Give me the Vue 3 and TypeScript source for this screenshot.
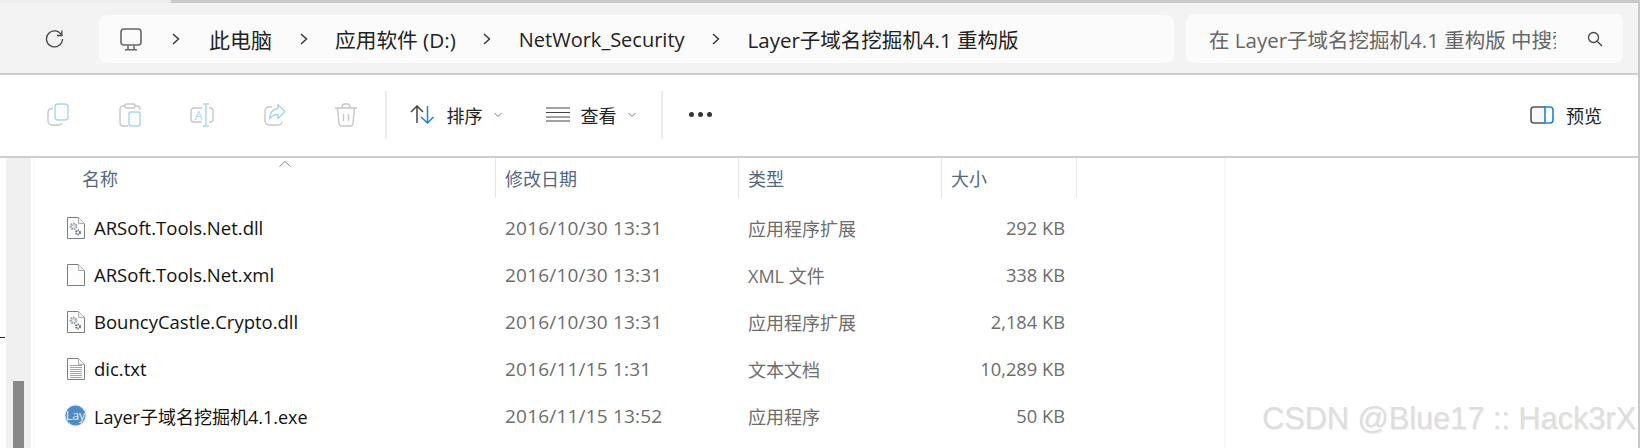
<script setup lang="ts">
interface FileRow {
  name: string
  date: string
  type: string
  size: string
  icon: 'dll' | 'blank' | 'txt' | 'exe'
}

const crumbs = [
  { label: '此电脑', cls: '' },
  { label: '应用软件 (D:)', cls: 'drive' },
  { label: 'NetWork_Security', cls: 'latin' },
  { label: 'Layer子域名挖掘机4.1 重构版', cls: 'mixed' },
]

const files: FileRow[] = [
  { name: 'ARSoft.Tools.Net.dll', date: '2016/10/30 13:31', type: '应用程序扩展', size: '292 KB', icon: 'dll' },
  { name: 'ARSoft.Tools.Net.xml', date: '2016/10/30 13:31', type: 'XML 文件', size: '338 KB', icon: 'blank' },
  { name: 'BouncyCastle.Crypto.dll', date: '2016/10/30 13:31', type: '应用程序扩展', size: '2,184 KB', icon: 'dll' },
  { name: 'dic.txt', date: '2016/11/15 1:31', type: '文本文档', size: '10,289 KB', icon: 'txt' },
  { name: 'Layer子域名挖掘机4.1.exe', date: '2016/11/15 13:52', type: '应用程序', size: '50 KB', icon: 'exe' },
]
</script>

<template>
  <div class="window">
    <div class="top-strip"></div>

    <div class="nav">
      <svg class="refresh" width="19" height="19" viewBox="0 0 19 19" fill="none" stroke="#444" stroke-width="1.3">
        <path d="M16.6 6.2A8 8 0 1 0 17.5 10" />
        <path d="M16.9 1.6v4.9H12" />
      </svg>
      <div class="address">
        <svg class="pc" width="22" height="23" viewBox="0 0 22 23" fill="none" stroke="#666" stroke-width="1.6">
          <rect x="1" y="1" width="20" height="16" rx="3" />
          <path d="M8 17.5v3.5M14 17.5v3.5M5 21.8h12" />
        </svg>
        <template v-for="c in crumbs" :key="c.label">
          <svg class="crumb-sep" width="8" height="12" viewBox="0 0 8 12" fill="none" stroke="#333" stroke-width="1.4">
            <path d="M1 1l5.5 5L1 11" />
          </svg>
          <span class="crumb" :class="c.cls">{{ c.label }}</span>
        </template>
      </div>
      <div class="search">
        <span class="search-text">在 Layer子域名挖掘机4.1 重构版 中搜索</span>
        <svg class="search-icon" width="16" height="16" viewBox="0 0 16 16" fill="none" stroke="#444" stroke-width="1.3">
          <circle cx="6.5" cy="6.5" r="5" />
          <path d="M10.2 10.2L15 15" />
        </svg>
      </div>
    </div>

    <div class="toolbar">
      <div class="tool-icons">
        <svg width="22" height="23" viewBox="0 0 22 23" fill="none" stroke-width="1.4">
          <path d="M6 5.5H5a4 4 0 0 0-4 4V18a4 4 0 0 0 4 4h6.5a4 4 0 0 0 3.500-2" stroke="#c6c6c6" />
          <rect x="8" y="1" width="13" height="16" rx="3" stroke="#a8d3f5" />
        </svg>
        <svg width="22" height="24" viewBox="0 0 22 24" fill="none" stroke-width="1.4">
          <path d="M6 3H4a3 3 0 0 0-3 3v14a3 3 0 0 0 3 3h5M16 3h2a3 3 0 0 1 3 3v1" stroke="#c6c6c6" />
          <rect x="6" y="1" width="10" height="4" rx="1.500" stroke="#c6c6c6" />
          <rect x="10" y="9" width="11" height="14" rx="2" stroke="#a8d3f5" />
        </svg>
        <svg width="24" height="24" viewBox="0 0 24 24" fill="none" stroke-width="1.4">
          <path d="M12 5H4a3 3 0 0 0-3 3v8a3 3 0 0 0 3 3h8M19 5h2a2.500 2.500 0 0 1 2 3v8a2.500 2.500 0 0 1-2 3h-2" stroke="#c6c6c6" />
          <path d="M13 1h6M16 1v22M13 23h6" stroke="#a8d3f5" />
          <text x="8.500" y="16.500" class="rename-a">A</text>
        </svg>
        <svg width="22" height="23" viewBox="0 0 22 23" fill="none" stroke-width="1.4">
          <path d="M8 4H5a4 4 0 0 0-4 4v10a4 4 0 0 0 4 4h9a4 4 0 0 0 4-3.500" stroke="#c6c6c6" />
          <path d="M14 1.500l7 7-7 7v-4c-4 0-6 1-8.500 4.500C6 10 9 6 14 5.500z" stroke="#a8d3f5" stroke-linejoin="round" />
        </svg>
        <svg width="22" height="24" viewBox="0 0 22 24" fill="none" stroke="#c6c6c6" stroke-width="1.4">
          <path d="M0 5h22M7 5V3.500A2.500 2.500 0 0 1 9.500 1h3A2.500 2.500 0 0 1 15 3.500V5" />
          <path d="M2.500 5l1.500 15.500A2.800 2.800 0 0 0 6.800 23h8.400a2.800 2.800 0 0 0 2.800-2.500L19.500 5" />
          <path d="M8.500 11v7M13.500 11v7" />
        </svg>
      </div>
      <span class="divider first"></span>
      <svg class="sort-icon" width="24" height="19" viewBox="0 0 24 19" fill="none" stroke-width="1.5">
        <path d="M1 7l6-6 6 6M7 1v17" stroke="#444" />
        <path d="M11 12l6.500 6 6-6M17.500 18V1" stroke="#1a82d8" />
      </svg>
      <span class="tool-label">排序</span>
      <svg class="caret" width="8" height="6" viewBox="0 0 8 6" fill="none" stroke="#777" stroke-width="1">
        <path d="M.5 1L4 4.500 7.500 1" />
      </svg>
      <svg class="view-icon" width="24" height="15" viewBox="0 0 24 15" fill="none" stroke="#444" stroke-width="1.2">
        <path d="M0 1h24M0 5.500h24M0 10h24M0 14h24" />
      </svg>
      <span class="tool-label">查看</span>
      <svg class="caret" width="8" height="6" viewBox="0 0 8 6" fill="none" stroke="#777" stroke-width="1">
        <path d="M.5 1L4 4.500 7.500 1" />
      </svg>
      <span class="divider second"></span>
      <span class="dots"><i></i><i></i><i></i></span>
      <svg class="preview-icon" width="24" height="18" viewBox="0 0 24 18" fill="none" stroke-width="1.6">
        <path d="M15 1H4a3 3 0 0 0-3 3v10a3 3 0 0 0 3 3h11" stroke="#555" fill="#f8f8f8" />
        <path d="M15 1h5a3 3 0 0 1 3 3v10a3 3 0 0 1-3 3h-5z" stroke="#1a82d8" />
      </svg>
      <span class="tool-label preview-label">预览</span>
    </div>

    <div class="body">
      <div class="tree-edge">
        <span class="tree-mark"></span>
      </div>
      <div class="scrollbar"><div class="thumb"></div></div>
      <div class="pane">
        <div class="list">
          <div class="head">
            <div class="hcell name-head">
              名称
              <svg class="sort-up" width="12" height="6" viewBox="0 0 12 6" fill="none" stroke="#888" stroke-width="1">
                <path d="M.5 5.500L6 .5l5.500 5" />
              </svg>
            </div>
            <div class="hcell">修改日期</div>
            <div class="hcell">类型</div>
            <div class="hcell">大小</div>
          </div>
          <div v-for="f in files" :key="f.name" class="row">
            <div class="name" :class="{ narrow: f.icon === 'exe' }">
              <svg v-if="f.icon === 'exe'" class="file-icon exe" width="23" height="23" viewBox="0 0 23 23">
                <circle cx="11.500" cy="11.500" r="11" fill="#e4ebf3" />
                <circle cx="11.500" cy="11.500" r="10" fill="#4f8ac9" />
                <text x="11.500" y="15.500" class="lay">Lay</text>
              </svg>
              <svg v-else class="file-icon" width="18" height="22" viewBox="0 0 18 22">
                <path d="M.5.5h11l6 6v15H.5z" fill="#fdfdfd" stroke="#7e7e7e" />
                <path d="M11.500.5v6h6" fill="#f2f2f2" stroke="#b0b0b0" />
                <g v-if="f.icon === 'dll'" fill="none">
                  <circle cx="6.500" cy="9.500" r="2.600" stroke="#9aa3ad" stroke-width="2.600" stroke-dasharray="1.500 0.800" />
                  <circle cx="11" cy="15.500" r="2" stroke="#6d7680" stroke-width="2" stroke-dasharray="1.300 0.700" />
                </g>
                <path v-if="f.icon === 'txt'" d="M3 7.500h12M3 9.500h12M3 11.500h12M3 13.500h12M3 15.500h12M3 17.500h12M3 19.500h12" stroke="#a6a6a6" stroke-width="1" />
              </svg>
              <span>{{ f.name }}</span>
            </div>
            <div class="date">{{ f.date }}</div>
            <div class="type">{{ f.type }}</div>
            <div class="size">{{ f.size }}</div>
          </div>
        </div>
      </div>
    </div>

    <div class="watermark">CSDN @Blue17 :: Hack3rX</div>
  </div>
</template>

<style scoped>
.window {
  position: relative;
  width: 1640px;
  height: 448px;
  overflow: hidden;
  background: #fff;
  box-sizing: border-box;
  border-right: 2px solid #c8c8c8;
  font-family: "Open Sans", "Noto Sans CJK SC", sans-serif;
  color: #1a1a1a;
  display: flex;
  flex-direction: column;
}
.top-strip {
  height: 3px;
  background: linear-gradient(90deg, #eeeeee 170px, #c9c9c9 172px);
}
.nav {
  height: 72px;
  box-sizing: border-box;
  background: #f3f3f3;
  border-bottom: 2px solid #cdcdcd;
  display: flex;
  align-items: flex-start;
  padding: 12px 15px 0 45px;
}
.refresh {
  margin-top: 14px;
  margin-right: 35px;
  flex: none;
}
.address {
  width: 1075px;
  height: 48px;
  box-sizing: border-box;
  background: #fbfbfb;
  border-radius: 8px;
  display: flex;
  align-items: center;
  padding-left: 21px;
  font-size: 21px;
  color: #222;
  flex: none;
}
.crumb-sep {
  margin: 0 27.5px;
  flex: none;
}
.pc + .crumb-sep {
  margin: 0 29px 0 30px;
}
.crumb {
  white-space: nowrap;
}
.crumb.drive {
  font-size: 20.7px;
}
.crumb.latin {
  font-size: 20px;
}
.crumb.mixed {
  font-size: 20.5px;
}
.search {
  width: 437px;
  height: 49px;
  margin-left: 12px;
  margin-top: -1px;
  box-sizing: border-box;
  background: #fbfbfb;
  border-radius: 8px;
  display: flex;
  align-items: center;
  padding: 0 20px 0 23px;
  flex: none;
}
.search-text {
  width: 347px;
  overflow: hidden;
  white-space: nowrap;
  font-size: 20.5px;
  color: #666;
}
.search-icon {
  margin-left: auto;
}
.toolbar {
  height: 83px;
  box-sizing: border-box;
  border-bottom: 2px solid #cdcdcd;
  display: flex;
  align-items: center;
  padding: 0 0 2px 47px;
  font-size: 18px;
}
.tool-icons {
  display: flex;
  align-items: center;
  gap: 49.5px;
}
.divider {
  width: 2px;
  height: 48px;
  background: #ececec;
}
.divider.first {
  margin-left: 27.5px;
  margin-right: 23px;
}
.sort-icon {
  margin-right: 13px;
}
.tool-label {
  color: #222;
}
.caret {
  margin-left: 11px;
}
.view-icon {
  margin-left: 44px;
  margin-right: 11px;
}
.divider.second {
  margin-left: 25px;
  margin-right: 26px;
}
.dots {
  display: flex;
  gap: 4px;
}
.dots i {
  width: 5px;
  height: 5px;
  border-radius: 50%;
  background: #333;
}
.preview-icon {
  margin-left: auto;
  margin-right: 12px;
}
.preview-label {
  margin-right: 36px;
}
.rename-a {
  font-size: 13px;
  font-family: "Open Sans", sans-serif;
  fill: #a8d3f5;
  text-anchor: middle;
  stroke: none;
}
.body {
  flex: 1;
  display: flex;
  min-height: 0;
}
.tree-edge {
  width: 6px;
  position: relative;
  flex: none;
}
.tree-mark {
  position: absolute;
  left: 0;
  top: 179px;
  width: 5px;
  height: 1px;
  background: #222;
}
.scrollbar {
  width: 11px;
  flex: none;
  background: #f0f0f0;
  background-clip: padding-box;
  border-right: 2px solid #fff;
  padding: 223px 7px 0;
  box-sizing: content-box;
}
.thumb {
  height: 80px;
  background: #888;
}
.pane {
  flex: 1;
  min-width: 0;
  border-left: 2px solid #f9f9f9;
}
.list {
  width: 1191px;
  box-sizing: border-box;
  height: 100%;
  border-right: 2px solid #f7f7f7;
}
.head,
.row {
  display: grid;
  grid-template-columns: 461px 243px 203px 135px;
}
.head {
  height: 40px;
  color: #55677f;
  font-size: 18px;
}
.hcell {
  position: relative;
  display: flex;
  align-items: center;
  padding-left: 9px;
  border-right: 1px solid #e5e5e5;
}
.hcell.name-head {
  padding-left: 47px;
}
.sort-up {
  position: absolute;
  left: 244px;
  top: 3px;
}
.row {
  height: 47px;
  align-items: center;
  font-size: 18px;
}
.head + .row {
  margin-top: 6px;
}
.name {
  display: flex;
  align-items: center;
  padding-left: 32px;
  color: #111;
  font-size: 18.5px;
  white-space: nowrap;
}
.name.narrow {
  font-size: 18px;
}
.file-icon {
  margin-right: 9px;
  flex: none;
}
.file-icon.exe {
  margin-left: -3px;
  margin-right: 7px;
}
.lay {
  font-size: 12.5px;
  font-family: "Open Sans", sans-serif;
  fill: #e8f0f8;
  text-anchor: middle;
}
.date,
.type {
  padding-left: 9px;
  color: #6d6d6d;
}
.date {
  font-size: 19px;
  letter-spacing: 0.2px;
}
.size {
  color: #6d6d6d;
  font-size: 18.3px;
  text-align: right;
  padding-right: 12px;
}
.watermark {
  position: absolute;
  right: 2px;
  bottom: 11px;
  font-family: "Liberation Sans", sans-serif;
  font-size: 30.7px;
  color: #dedede;
  text-shadow: 1px 1px 1px #ececec;
  white-space: nowrap;
}
</style>
